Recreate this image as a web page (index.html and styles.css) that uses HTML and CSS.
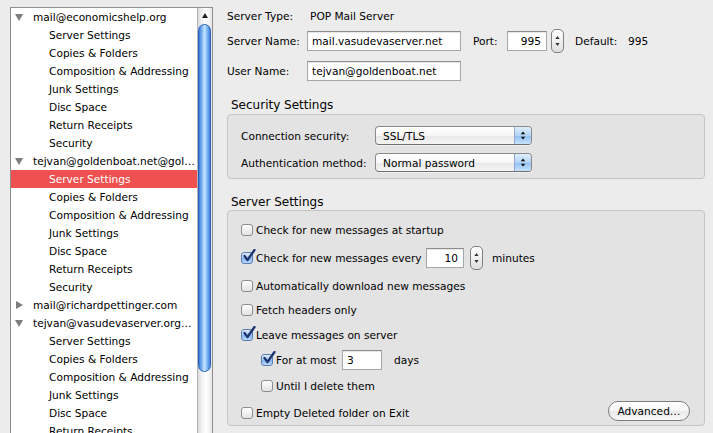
FILE: index.html
```html
<!DOCTYPE html>
<html>
<head>
<meta charset="utf-8">
<title>Account Settings</title>
<link rel="stylesheet" href="styles.css">
</head>
<body>
<div class="window">
  <aside class="sidebar">
    <div class="listbox">
      <ul class="tree">
        <li class="acct"><svg viewBox="0 0 8 8"><polygon points="0,1 8,1 4,8" fill="#7d7d7d"/></svg>mail@economicshelp.org</li>
        <li class="item">Server Settings</li>
        <li class="item">Copies &amp; Folders</li>
        <li class="item">Composition &amp; Addressing</li>
        <li class="item">Junk Settings</li>
        <li class="item">Disc Space</li>
        <li class="item">Return Receipts</li>
        <li class="item">Security</li>
        <li class="acct"><svg viewBox="0 0 8 8"><polygon points="0,1 8,1 4,8" fill="#7d7d7d"/></svg>tejvan@goldenboat.net@gol…</li>
        <li class="item sel">Server Settings</li>
        <li class="item">Copies &amp; Folders</li>
        <li class="item">Composition &amp; Addressing</li>
        <li class="item">Junk Settings</li>
        <li class="item">Disc Space</li>
        <li class="item">Return Receipts</li>
        <li class="item">Security</li>
        <li class="acct"><svg viewBox="0 0 8 8"><polygon points="1,0 8,4 1,8" fill="#7d7d7d"/></svg>mail@richardpettinger.com</li>
        <li class="acct"><svg viewBox="0 0 8 8"><polygon points="0,1 8,1 4,8" fill="#7d7d7d"/></svg>tejvan@vasudevaserver.org…</li>
        <li class="item">Server Settings</li>
        <li class="item">Copies &amp; Folders</li>
        <li class="item">Composition &amp; Addressing</li>
        <li class="item">Junk Settings</li>
        <li class="item">Disc Space</li>
        <li class="item">Return Receipts</li>
      </ul>
      <div class="scrollbar">
        <div class="sb-up"><svg viewBox="0 0 6 5"><polygon points="3,0 6,5 0,5" fill="#222"/></svg></div>
        <div class="sb-thumb"></div>
      </div>
    </div>
  </aside>

  <main class="pane">
    <div class="row r1">
      <span class="lbl">Server Type:</span>
      <span class="value">POP Mail Server</span>
    </div>
    <div class="row r2">
      <span class="lbl">Server Name:</span>
      <span class="field name">mail.vasudevaserver.net</span>
      <span class="port-lbl">Port:</span>
      <span class="field port">995</span>
      <span class="stepper"><svg viewBox="0 0 13 24"><polygon points="6.5,6 9,9.5 4,9.5" fill="#333"/><polygon points="6.5,18 9,14.5 4,14.5" fill="#333"/></svg></span>
      <span class="def-lbl">Default:</span>
      <span>995</span>
    </div>
    <div class="row r3">
      <span class="lbl">User Name:</span>
      <span class="field name">tejvan@goldenboat.net</span>
    </div>

    <h2 class="section-title sec1">Security Settings</h2>
    <section class="group security">
      <div class="srow">
        <span class="sec-lbl">Connection security:</span>
        <span class="popup"><span class="popup-text">SSL/TLS</span><span class="popup-arrows"><svg viewBox="0 0 17 19"><polygon points="8.5,5 11,8.2 6,8.2" fill="#111"/><polygon points="8.5,14 11,10.8 6,10.8" fill="#111"/></svg></span></span>
      </div>
      <div class="srow">
        <span class="sec-lbl">Authentication method:</span>
        <span class="popup"><span class="popup-text">Normal password</span><span class="popup-arrows"><svg viewBox="0 0 17 19"><polygon points="8.5,5 11,8.2 6,8.2" fill="#111"/><polygon points="8.5,14 11,10.8 6,10.8" fill="#111"/></svg></span></span>
      </div>
    </section>

    <h2 class="section-title sec2">Server Settings</h2>
    <section class="group server">
      <div class="crow c1"><span class="cb"></span>Check for new messages at startup</div>
      <div class="crow c2"><span class="cb on"><svg viewBox="0 0 14 14"><polyline points="2.5,7 5.5,11 12.5,1" fill="none" stroke="#1c3471" stroke-width="2.3" stroke-linecap="round" stroke-linejoin="round"/></svg></span><span class="every">Check for new messages every</span><span class="field num">10</span><span class="stepper"><svg viewBox="0 0 13 24"><polygon points="6.5,6 9,9.5 4,9.5" fill="#333"/><polygon points="6.5,18 9,14.5 4,14.5" fill="#333"/></svg></span><span class="unit">minutes</span></div>
      <div class="crow c3"><span class="cb"></span>Automatically download new messages</div>
      <div class="crow c4"><span class="cb"></span>Fetch headers only</div>
      <div class="crow c5"><span class="cb on"><svg viewBox="0 0 14 14"><polyline points="2.5,7 5.5,11 12.5,1" fill="none" stroke="#1c3471" stroke-width="2.3" stroke-linecap="round" stroke-linejoin="round"/></svg></span>Leave messages on server</div>
      <div class="crow c6 indent"><span class="cb on"><svg viewBox="0 0 14 14"><polyline points="2.5,7 5.5,11 12.5,1" fill="none" stroke="#1c3471" stroke-width="2.3" stroke-linecap="round" stroke-linejoin="round"/></svg></span><span class="atmost">For at most</span><span class="field days">3</span><span class="unit2">days</span></div>
      <div class="crow c7 indent"><span class="cb"></span>Until I delete them</div>
      <div class="crow c8"><span class="cb"></span><span class="grow">Empty Deleted folder on Exit</span><span class="button">Advanced…</span></div>
    </section>
  </main>
</div>
</body>
</html>
```

FILE: styles.css
```css
* { box-sizing: border-box; }
html, body { margin: 0; padding: 0; }
body {
  width: 713px;
  height: 433px;
  overflow: hidden;
  background: #ececec;
  font-family: "DejaVu Sans", "Liberation Sans", sans-serif;
  font-size: 10.6px;
  color: #000;
}
.window { display: flex; height: 433px; }

/* ---------- sidebar ---------- */
.sidebar { width: 215px; flex: none; padding: 7px 0 0 10px; }
.listbox {
  width: 203px;
  height: 440px;
  border: 1px solid #8f8f8f;
  border-bottom: none;
  background: #fff;
  display: flex;
}
.tree { list-style: none; margin: 0; padding: 0; width: 186px; flex: none; overflow: hidden; }
.tree li { height: 18px; line-height: 19px; white-space: nowrap; overflow: hidden; }
.acct { display: flex; align-items: center; padding-left: 4px; }
.acct svg { width: 8px; height: 8px; margin-right: 10px; flex: none; }
.item { padding-left: 38px; }
.item.sel { background: #ef5050; color: #fff; }

.scrollbar {
  width: 15px;
  flex: none;
  border-left: 1px solid #b4b4b4;
  background: linear-gradient(to right, #dcdcdc, #f6f6f6 35%, #ffffff 60%, #e6e6e6);
  display: flex;
  flex-direction: column;
}
.sb-up { height: 15px; display: flex; align-items: center; justify-content: center; }
.sb-up svg { width: 6px; height: 5px; }
.sb-thumb {
  margin: 1px 1px 0 0;
  height: 348px;
  border-radius: 7px;
  border: 1px solid #2c5fb8;
  background: linear-gradient(to right, #3a79d6, #86bdf5 30%, #c4e2fd 50%, #86bdf5 72%, #3f7fd9);
}

/* ---------- right pane ---------- */
.pane { flex: 1; padding: 6px 8px 0 12px; display: flex; flex-direction: column; }
.row { display: flex; align-items: center; height: 20px; white-space: nowrap; }
.r2 { margin-top: 5px; }
.r3 { margin-top: 10px; }
.lbl { width: 80px; flex: none; }
.value { padding-left: 3px; }

.field {
  height: 20px;
  background: #fff;
  border: 1px solid #a7a7a7;
  border-top-color: #8c8c8c;
  box-shadow: inset 0 1px 1px rgba(0, 0, 0, 0.1);
  padding: 0 4px;
  line-height: 18px;
  white-space: nowrap;
  flex: none;
}
.field.name { width: 154px; }
.port-lbl { margin-left: 12px; width: 34px; }
.field.port { width: 40px; text-align: right; padding-right: 5px; }
.stepper {
  width: 13px;
  height: 24px;
  margin-left: 4px;
  flex: none;
  border: 1px solid #7e7e7e;
  border-radius: 5px;
  background: linear-gradient(#ffffff, #f0f0f0 50%, #dedede);
  display: flex;
}
.stepper svg { width: 11px; height: 22px; }
.def-lbl { margin-left: 11px; width: 53px; }

.section-title {
  font-size: 12px;
  font-weight: normal;
  line-height: 16px;
  margin: 0;
  padding-left: 4px;
}
.sec1 { margin-top: 16px; margin-bottom: 1px; }
.sec2 { margin-top: 15px; margin-bottom: 0; }

.group {
  border: 1px solid #c4c4c4;
  border-radius: 4px;
  background: #e3e3e3;
}
.security { padding: 11px 0 6px 13px; display: flex; flex-direction: column; gap: 8px; }
.srow { display: flex; align-items: center; height: 19px; }
.sec-lbl { width: 134px; flex: none; }
.popup {
  width: 157px;
  height: 19px;
  display: flex;
  border: 1px solid #8a8a8a;
  border-bottom-color: #6f6f6f;
  border-radius: 4px;
  overflow: hidden;
  background: linear-gradient(#ffffff, #f7f7f7 50%, #e9e9e9 51%, #f4f4f4);
  box-shadow: 0 1px 0 rgba(255, 255, 255, 0.5);
}
.popup-text { flex: 1; padding-left: 7px; line-height: 18px; }
.popup-arrows {
  width: 17px;
  flex: none;
  border-left: 1px solid #8fa9cc;
  background: linear-gradient(#e0eefd, #b3d4f7 50%, #8ebff2 51%, #c8e3fd);
  display: flex;
}
.popup-arrows svg { width: 16px; height: 17px; }

.server { padding: 9px 14px 2px 13px; display: flex; flex-direction: column; }
.crow { display: flex; align-items: center; height: 20px; white-space: nowrap; }
.c2 { margin-top: 8px; }
.c3 { margin-top: 8px; }
.c4 { margin-top: 4px; }
.c5 { margin-top: 5px; }
.c6 { margin-top: 5px; }
.c7 { margin-top: 6px; }
.c8 { margin-top: 7px; }
.indent { padding-left: 20px; }

.cb {
  width: 12px;
  height: 12px;
  flex: none;
  margin-right: 3px;
  border: 1px solid #8d8d8d;
  border-radius: 3px;
  background: linear-gradient(#ffffff, #f1f1f1 50%, #e2e2e2);
  position: relative;
}
.cb.on {
  border-color: #5b7db3;
  background: linear-gradient(#dbe9fb, #a9ccf3 50%, #86b6ee 51%, #b9d8f8);
}
.cb svg { position: absolute; left: 0; top: -4px; width: 14px; height: 14px; }

.every { width: 170px; flex: none; }
.field.num { width: 38px; text-align: right; padding-right: 5px; }
.crow .stepper { margin-left: 6px; }
.unit { margin-left: 9px; }
.atmost { width: 66px; flex: none; }
.field.days { width: 40px; height: 20px; }
.unit2 { margin-left: 12px; }
.grow { flex: 1; }
.button {
  width: 82px;
  height: 20px;
  margin-top: -4px;
  border: 1px solid #7d7d7d;
  border-radius: 10px;
  background: linear-gradient(#ffffff, #f6f6f6 50%, #e8e8e8 51%, #f9f9f9);
  text-align: center;
  line-height: 18px;
  flex: none;
}
```
